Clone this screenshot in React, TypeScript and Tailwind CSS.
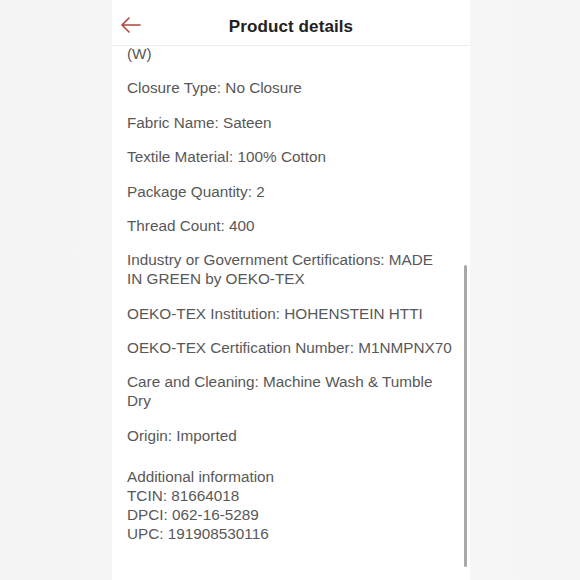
const details: string[][] = [
  ['Closure Type: No Closure'],
  ['Fabric Name: Sateen'],
  ['Textile Material: 100% Cotton'],
  ['Package Quantity: 2'],
  ['Thread Count: 400'],
  ['Industry or Government Certifications: MADE', 'IN GREEN by OEKO-TEX'],
  ['OEKO-TEX Institution: HOHENSTEIN HTTI'],
  ['OEKO-TEX Certification Number: M1NMPNX70'],
  ['Care and Cleaning: Machine Wash & Tumble', 'Dry'],
  ['Origin: Imported'],
]

const extra = ['Additional information', 'TCIN: 81664018', 'DPCI: 062-16-5289', 'UPC: 191908530116']

export default function App() {
  return (
    <div
      className="w-[580px] h-[580px] overflow-hidden bg-gradient-to-r from-[#f3f3f3] via-[#f8f8f8] to-[#f5f5f5]"
      style={{ fontFamily: '"Liberation Sans", Arial, sans-serif' }}
    >
      <div className="relative ml-[112px] w-[358px] h-[580px] bg-white">
        <div className="relative flex items-center justify-center h-[46px] border-b border-[#ececec]">
          <svg
            className="absolute left-[8px] top-[16px]"
            width="22"
            height="18"
            viewBox="0 0 22 18"
            fill="none"
            stroke="#b4443c"
            strokeWidth="1.6"
            strokeLinecap="round"
            strokeLinejoin="round"
          >
            <path d="M20 9H2M9 2L2 9l7 7" />
          </svg>
          <span className="text-[17px] font-bold text-[#222] tracking-[0.1px] mt-[8px]">Product details</span>
        </div>

        <div className="pl-[15px] pr-[10px] text-[15.3px] leading-[18.8px] text-[#585858]">
          <div className="-mt-[1px]">(W)</div>
          {details.map((lines, i) => (
            <div key={i} className="mt-[15.6px]">
              {lines.map((l, j) => (
                <div key={j}>{l}</div>
              ))}
            </div>
          ))}
          <div className="mt-[23px]">
            {extra.map((l, j) => (
              <div key={j}>{l}</div>
            ))}
          </div>
        </div>

        <div className="absolute left-[352px] top-[265px] w-[3px] h-[302px] rounded-full bg-[#a9a9a9]" />
      </div>
    </div>
  )
}
